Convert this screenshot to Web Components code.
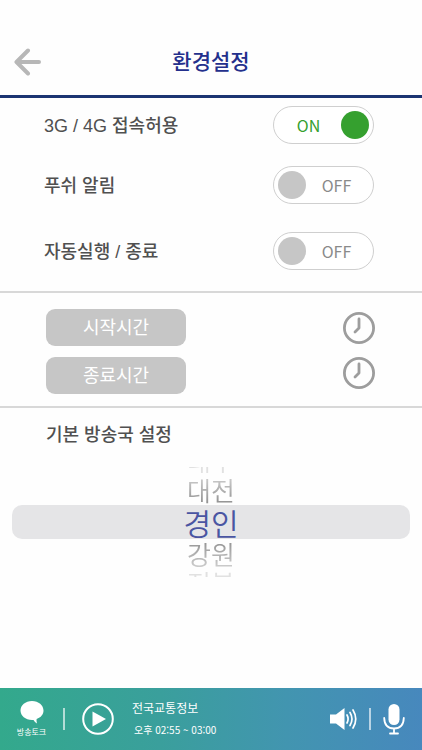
<!DOCTYPE html>
<html lang="ko">
<head>
<meta charset="utf-8">
<meta name="viewport" content="width=device-width, initial-scale=1">
<title>환경설정</title>
<style>
body{margin:0;background:#fefefe;font-family:"Liberation Sans","Noto Sans CJK KR",sans-serif;color:#505050}
</style>
</head>
<body>
<settings-app></settings-app>
<script>
const define=(name,html,setup)=>customElements.define(name,class extends HTMLElement{
  constructor(){
    super();
    const t=document.createElement('template');
    t.innerHTML='<style>*{box-sizing:border-box}button{display:block;font:inherit;color:inherit;border:0;padding:0;background:none;cursor:pointer}svg{display:block}</style>'+html;
    this.attachShadow({mode:'open'}).append(t.content.cloneNode(true));
  }
  connectedCallback(){if(setup)setup(this,this.shadowRoot)}
});

define('app-header',`
<style>
:host{display:grid;grid-template-columns:56px 1fr 56px;align-items:center;height:98px;padding-top:28px;border-bottom:3px solid #1b3472}
button{justify-self:start;margin-left:14px}
h1{margin:0;padding-bottom:3px;text-align:center;font-size:21px;line-height:28px;font-weight:500;color:#24308c;font-family:"Noto Sans CJK KR",sans-serif}
</style>
<button aria-label="뒤로"><svg width="28" height="28" viewBox="0 0 28 28" fill="none" stroke="#b7b7b7" stroke-width="4" stroke-linecap="round" stroke-linejoin="round"><path d="M14 2.5 2.5 14 14 25.5M3 14H25"/></svg></button>
<h1><slot></slot></h1>`);

define('toggle-row',`
<style>
:host{display:block}
label{display:flex;align-items:center;justify-content:space-between;padding:0 48px 0 44px;height:38px;font-size:18px;line-height:26px;font-weight:500}
.name{padding-top:2px}
.sw{position:relative;display:flex;align-items:center;width:101px;height:38px;border:1px solid #cfcfcf;border-radius:19px;background:#fff;padding:0 4px;font:400 16px/24px "Noto Sans CJK KR",sans-serif;color:#8a8a8a;flex:none}
input{position:absolute;inset:0;width:100%;height:100%;margin:0;opacity:0;cursor:pointer}
i{width:28px;height:28px;border-radius:50%;background:#c6c6c6}
.state{flex:1;text-align:center;padding-right:2px}
.on{display:none}
.sw:has(:checked){flex-direction:row-reverse;color:#35a02f}
.sw:has(:checked) i{background:#35a02f}
.sw:has(:checked) .on{display:inline}
.sw:has(:checked) .off{display:none}
</style>
<label><span class="name"><slot></slot></span><span class="sw"><input type="checkbox" role="switch"><i></i><span class="state"><span class="on">ON</span><span class="off">OFF</span></span></span></label>`,
(el,r)=>{r.querySelector('input').checked=el.hasAttribute('checked')});

define('time-button',`
<style>
:host{display:block}
button{width:140px;height:37px;border-radius:9px;background:#c6c6c6;color:#fff;font-size:18px;line-height:26px}
</style><button><slot></slot></button>`);

define('clock-button',`
<style>:host{display:block}</style>
<button><svg width="32" height="32" viewBox="0 0 32 32" fill="none" stroke="#9d9d9d" stroke-width="2.8" stroke-linecap="round" stroke-linejoin="round"><circle cx="16" cy="16" r="14.6"/><path d="M16 7V16L12 20"/></svg></button>`,
(el,r)=>r.querySelector('button').setAttribute('aria-label',el.getAttribute('label')));

define('station-picker',`
<style>
:host{display:block;position:relative;padding:0 12px}
fieldset{border:0;margin:0;padding:0;min-width:0;font-family:"Noto Sans CJK KR",sans-serif;font-weight:350}
label{display:flex;justify-content:center;align-items:center;height:30px;font-size:26px;line-height:30px;color:#8e8e8e}
input{position:absolute;opacity:0;margin:0}
label.sel{height:34px;border-radius:10px;background:#e5e5e7;font-size:30px;line-height:34px;color:#4a55a2}
.edge{height:6px;line-height:24px;opacity:.25;overflow:hidden}
.first{align-items:flex-end;margin-bottom:2px}
.last{align-items:flex-start;margin-top:2px}
.up{-webkit-mask:linear-gradient(#0006,#000)}
.down{-webkit-mask:linear-gradient(#000,#0006)}
</style>
<fieldset aria-label="기본 방송국">
<label class="edge first"><input type="radio" name="s"><span>대구</span></label>
<label class="up"><input type="radio" name="s"><span>대전</span></label>
<label class="sel"><input type="radio" name="s" checked><span>경인</span></label>
<label class="down"><input type="radio" name="s"><span>강원</span></label>
<label class="edge last"><input type="radio" name="s"><span>전북</span></label>
</fieldset>`);

define('player-bar',`
<style>
:host{display:flex;align-items:center;height:62px;padding:0 17px;color:#fff;background:linear-gradient(90deg,#33a98c 0,#3a9f9c 38%,#4295b0 68%,#4788bd 100%);font-family:"Noto Sans CJK KR",sans-serif}
.talk{display:flex;flex-direction:column;align-items:center;gap:2px;font-size:8px;line-height:12px;width:29px;white-space:nowrap}
hr{width:2px;height:22px;margin:0;border:0;background:#ffffffa0}
.talk+hr{margin:0 17px}
.info{flex:1;margin-left:18px;min-width:0}
p{margin:0;font-size:12px;line-height:18px}
p+p{font-size:10px;margin-top:4px;padding-left:2px}
.vol+hr{margin:0 12px}
</style>
<button class="talk"><svg width="24" height="24" viewBox="0 0 24 24" fill="#fff"><path d="M12 1C5.400 1 .5 5.400.5 10.500S5.400 20 12 20l1.500-.1Q15 22.500 17 23.500 16.300 21 16.600 19C21 17.500 23.500 14.300 23.500 10.500 23.500 5.400 18.600 1 12 1Z"/></svg><span>방송토크</span></button>
<hr>
<button aria-label="재생"><svg width="32" height="32" viewBox="0 0 32 32"><circle cx="16" cy="16" r="14.800" fill="none" stroke="#fff" stroke-width="2"/><path d="M10.500 8.500V23.500L24 16Z" fill="#fff"/></svg></button>
<div class="info"><p>전국교통정보</p><p>오후 02:55 ~ 03:00</p></div>
<button class="vol" aria-label="음량"><svg width="28" height="24" viewBox="0 0 28 24"><path d="M1 7.500H7L15.500 1V23L7 16.500H1Z" fill="#fff"/><path d="M18 8Q20.200 12 18 16M21 5.500Q25 12 21 18.500M24 3Q29.500 12 24 21" fill="none" stroke="#fff" stroke-width="1.700" stroke-linecap="round"/></svg></button>
<hr>
<button aria-label="음성"><svg width="22" height="32" viewBox="0 0 22 32"><rect x="5.500" y="1" width="11" height="21" rx="5.500" fill="#fff"/><path d="M1.200 15Q1.500 25.500 11 25.500T20.800 15M11 25.500V30.500M7 30.500H15" fill="none" stroke="#fff" stroke-width="1.800" stroke-linecap="round"/></svg></button>`);

define('settings-app',`
<style>
:host{display:flex;flex-direction:column;min-height:100vh}
main{flex:1}
section{border-bottom:2px solid #d8d8d8}
.net{display:grid;padding:8px 0 21px}
.auto{margin-top:28px}.push{margin-top:22px}
.times{display:flex;justify-content:space-between;padding:16px 47px 12px 46px}
.col{display:grid;gap:11px;align-content:start}
.clocks{gap:13px;padding-top:3px}
h2{margin:0;padding:14px 46px 0;font-size:18px;line-height:26px;font-weight:500}
station-picker{margin-top:19px}
</style>
<app-header>환경설정</app-header>
<main>
<section class="net">
<toggle-row checked>3G / 4G 접속허용</toggle-row>
<toggle-row class="push">푸쉬 알림</toggle-row>
<toggle-row class="auto">자동실행 / 종료</toggle-row>
</section>
<section class="times">
<div class="col"><time-button>시작시간</time-button><time-button>종료시간</time-button></div>
<div class="col clocks"><clock-button label="시작시간 선택"></clock-button><clock-button label="종료시간 선택"></clock-button></div>
</section>
<h2>기본 방송국 설정</h2>
<station-picker></station-picker>
</main>
<player-bar></player-bar>`);
</script>
</body>
</html>
